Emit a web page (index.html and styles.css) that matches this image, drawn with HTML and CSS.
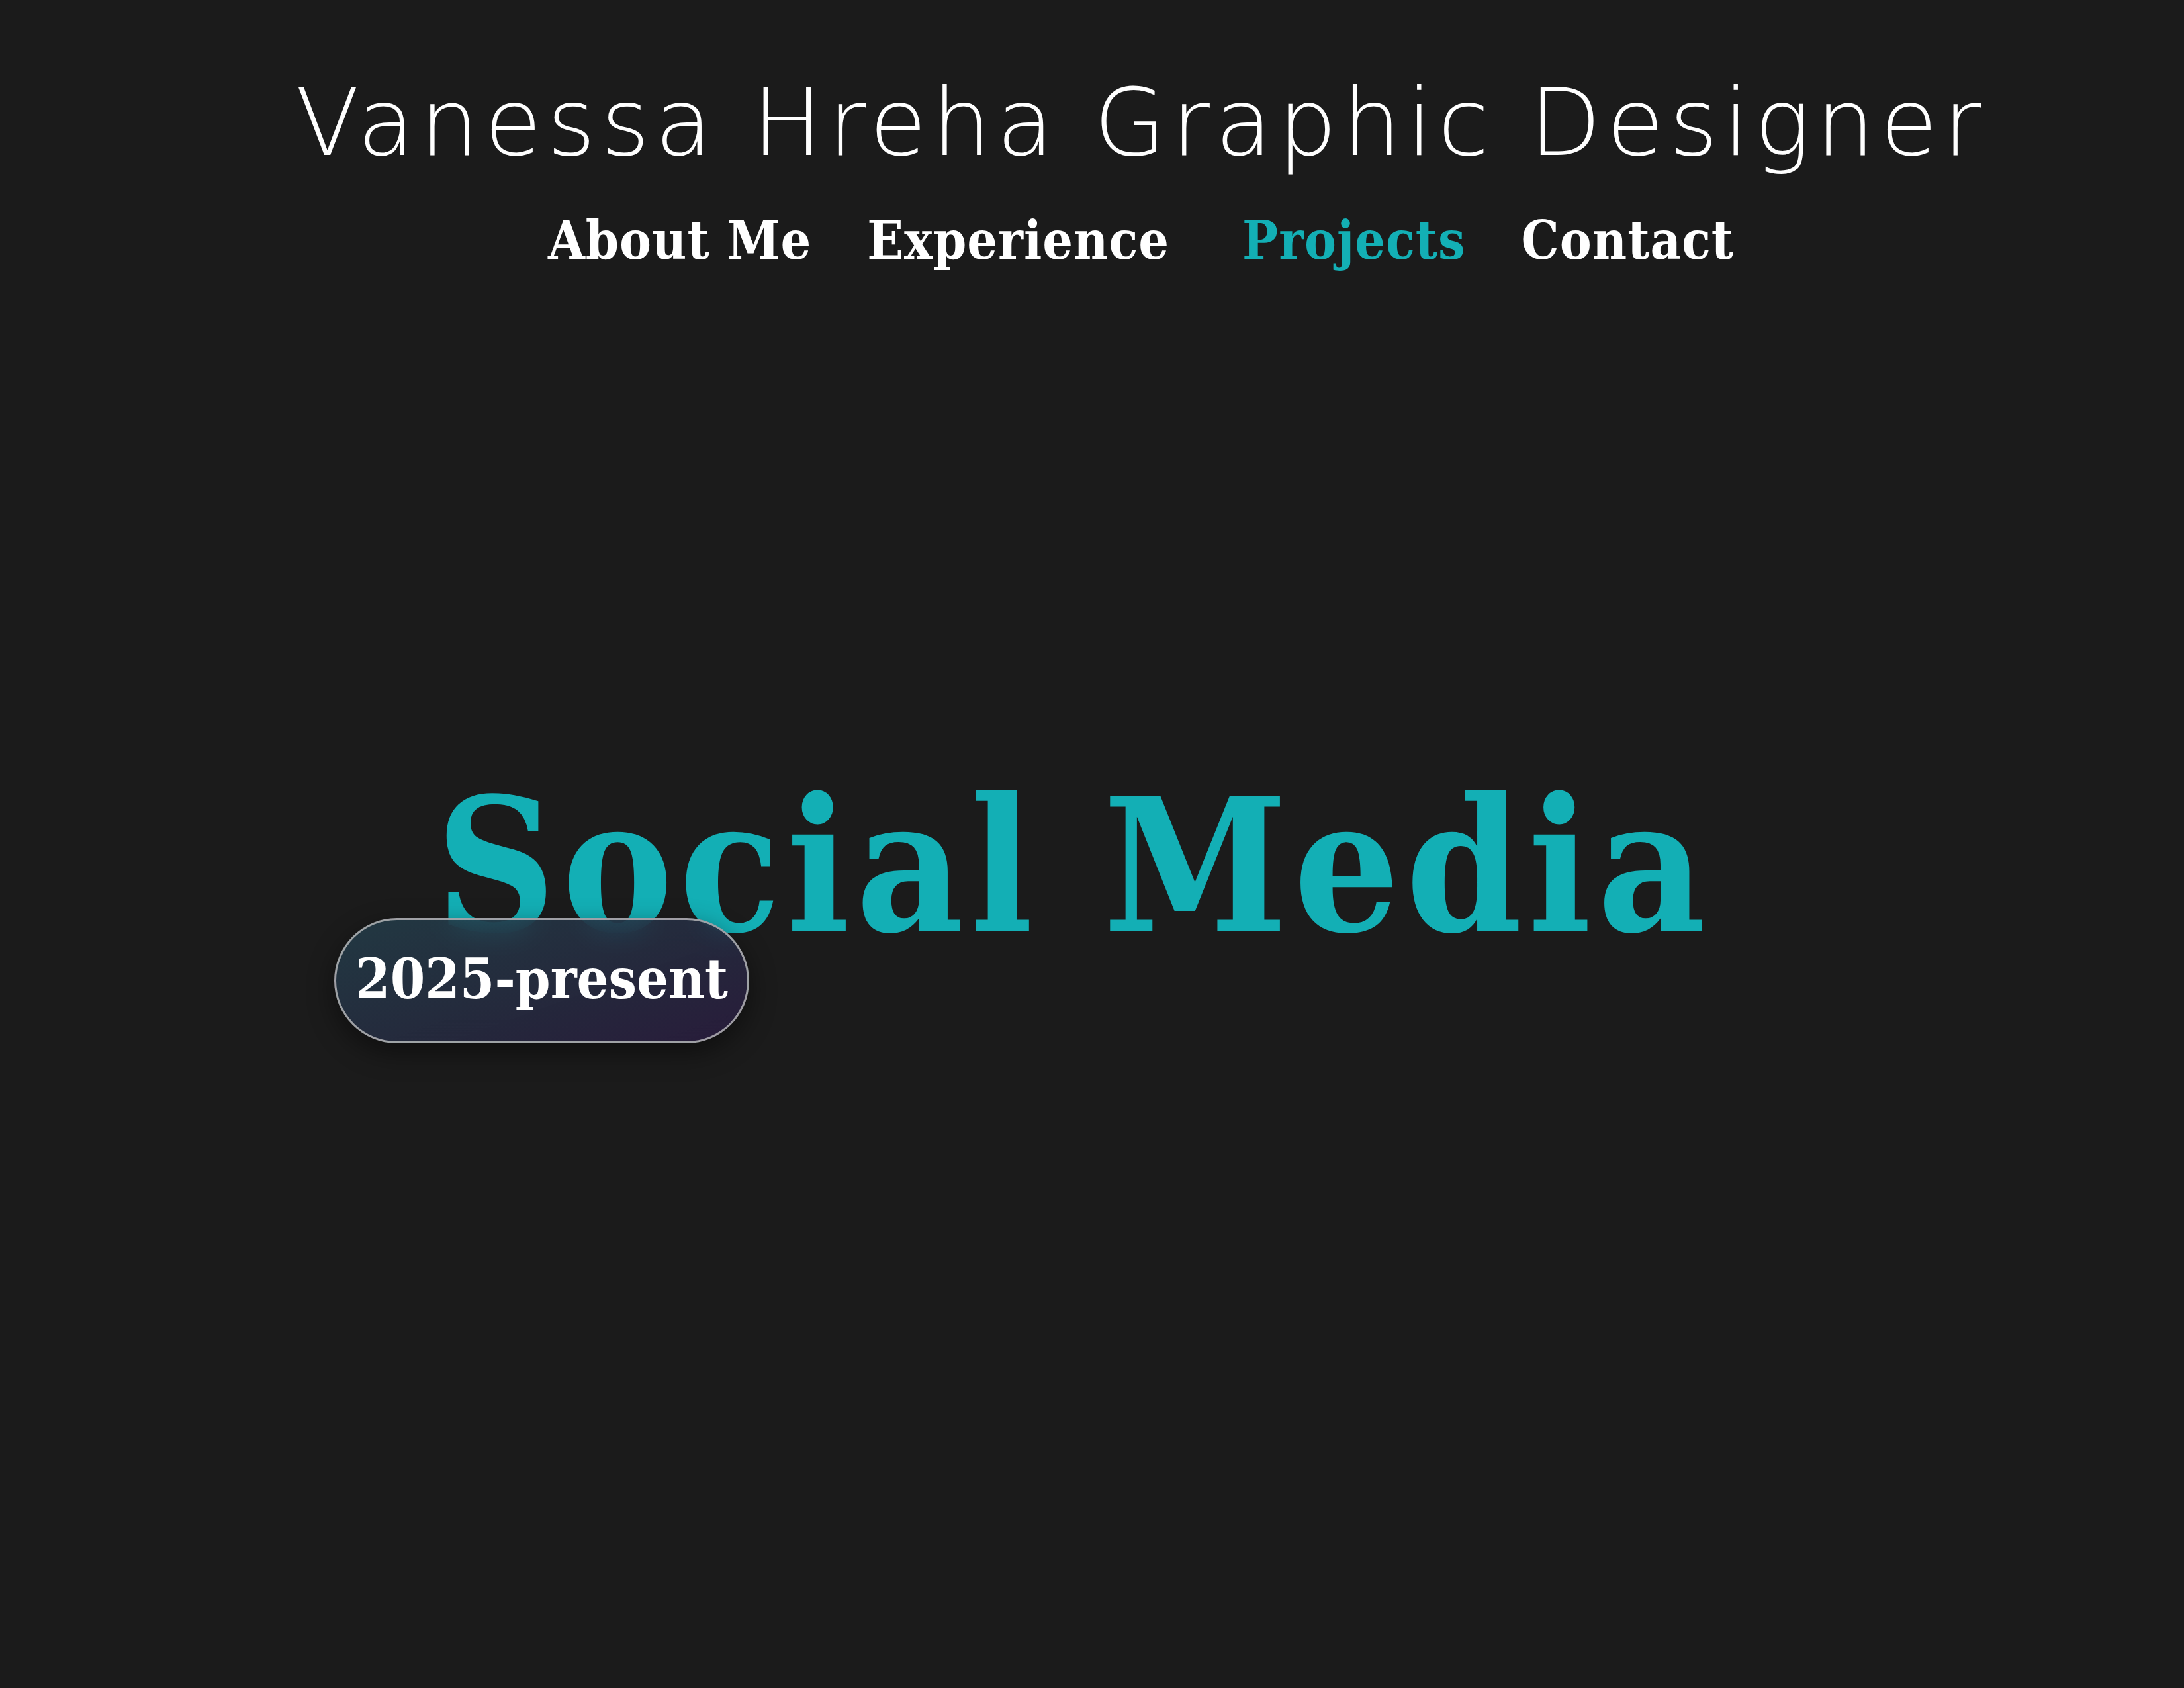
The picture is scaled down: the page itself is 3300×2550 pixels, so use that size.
FILE: index.html
```html
<!DOCTYPE html>
<html lang="en">
<head>
<meta charset="utf-8">
<title>Vanessa Hreha Graphic Designer</title>
<link rel="stylesheet" href="styles.css">
</head>
<body>
<header class="site-header">
  <h1 class="site-title">Vanessa Hreha Graphic Designer</h1>
  <nav class="main-nav">
    <a class="nav-link" href="#about">About Me</a>
    <a class="nav-link" href="#experience">Experience</a>
    <a class="nav-link nav-link-active" href="#projects">Projects</a>
    <a class="nav-link" href="#contact">Contact</a>
  </nav>
</header>
<main class="hero">
  <div class="hero-heading-wrap">
    <h2 class="hero-heading">Social Media</h2>
    <div class="date-badge">2025-present</div>
  </div>
</main>
</body>
</html>
```

FILE: styles.css
```css
html, body {
  margin: 0;
  padding: 0;
}
body {
  background: #1b1b1b;
  width: 3300px;
  height: 2550px;
  overflow: hidden;
}
.site-header {
  padding-top: 101px;
  padding-left: 148px;
  text-align: center;
}
.site-title {
  margin: 0;
  font-family: "DejaVu Sans", sans-serif;
  font-weight: 200;
  font-size: 141px;
  line-height: 169px;
  color: #ffffff;
  letter-spacing: 8px;
}
.main-nav {
  margin-top: 53px;
  display: flex;
  justify-content: center;
  gap: 84px;
  height: 80px;
}
.nav-link {
  font-family: "DejaVu Serif", serif;
  font-stretch: condensed;
  font-weight: 700;
  font-size: 80px;
  line-height: 80px;
  color: #ffffff;
  text-decoration: none;
  letter-spacing: 1px;
}
.nav-link-active {
  color: #13afb5;
  margin-left: 26px;
}
.hero {
  margin-top: 765px;
  padding-right: 56px;
  text-align: center;
}
.hero-heading-wrap {
  display: inline-block;
  position: relative;
}
.hero-heading {
  margin: 0;
  font-family: "DejaVu Serif", serif;
  font-stretch: condensed;
  font-weight: 700;
  font-size: 280px;
  line-height: 280px;
  letter-spacing: 9px;
  color: #13afb5;
}
.date-badge {
  position: absolute;
  left: -153px;
  top: 219px;
  width: 627px;
  height: 189px;
  box-sizing: border-box;
  border-radius: 95px;
  border: 3px solid rgba(200, 200, 200, 0.75);
  background: linear-gradient(160deg, rgba(36, 64, 76, 0.82) 0%, rgba(38, 44, 66, 0.85) 55%, rgba(42, 28, 62, 0.9) 100%);
  backdrop-filter: blur(18px);
  box-shadow: 0 14px 40px rgba(0, 0, 0, 0.45);
  display: flex;
  align-items: center;
  justify-content: center;
  font-family: "DejaVu Serif", serif;
  font-stretch: condensed;
  font-weight: 700;
  font-size: 84px;
  line-height: 84px;
  color: #ffffff;
  padding-bottom: 6px;
}
```
